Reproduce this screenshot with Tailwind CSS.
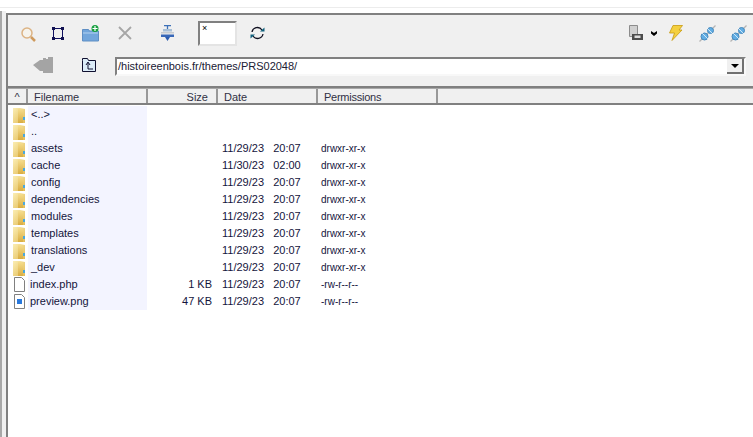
<!DOCTYPE html>
<html lang="en">

<head>
    <meta charset="UTF-8">
    <meta name="viewport" content="width=device-width, initial-scale=1.0">
    <title>histoireenbois.fr - FTP</title>
    <script src="https://cdn.jsdelivr.net/npm/@tailwindcss/browser@4"></script>
</head>

<body class="w-[753px] h-[437px] overflow-hidden bg-white font-['Liberation_Sans',sans-serif] text-[11px] text-[#14143c]">
    <!-- hidden gradients for the folder icons -->
    <svg class="absolute w-0 h-0">
        <defs>
            <linearGradient id="folderBack" x1="0" y1="0" x2="1" y2="1">
                <stop offset="0" stop-color="#fbeeb4" />
                <stop offset="1" stop-color="#e2bb55" />
            </linearGradient>
            <linearGradient id="folderFront" x1="0" y1="0" x2="0" y2="1">
                <stop offset="0" stop-color="#f6dd8c" />
                <stop offset="1" stop-color="#d9ad42" />
            </linearGradient>
        </defs>
    </svg>
    <div class="h-[7px]"></div>
    <div class="h-[1px] bg-[#ececec]"></div>
    <div class="h-[3px]"></div>
    <div class="flex h-[426px]">
        <div class="w-[2px] bg-[#a8a8a8]"></div>
        <div class="w-[4px] bg-[#f0f0f0]"></div>
        <div class="flex-1 flex flex-col min-w-0">
            <div class="h-[2px]"></div>
            <div class="flex-1 flex flex-col border-l-2 border-t-2 border-[#808080] min-w-0">
                <!-- toolbar -->
                <div class="h-[71px] bg-[#f0f0f0] flex flex-col">
                    <div class="h-[36px] flex items-center">
                        <svg class="ml-[13px] mt-[2px] w-[15px] h-[15px]" viewBox="0 0 15 15" fill="none">
                            <circle cx="6" cy="6" r="5" stroke="#dcb384" stroke-width="1.500" fill="#f6f3ec" />
                            <path d="M10 10l4 4" stroke="#cf9a5c" stroke-width="2.500" />
                        </svg>
                        <svg class="ml-[15px] w-[14px] h-[15px]" viewBox="0 0 14 15" fill="none">
                            <path d="M2.500 2.500h9v10h-9z" stroke="#101060" />
                            <path d="M1 1h3v3H1zM10 1h3v3h-3zM1 11h3v3H1zM10 11h3v3h-3z" fill="#101050" />
                        </svg>
                        <svg class="ml-[17px] w-[17px] h-[17px]" viewBox="0 0 17 17" fill="none">
                            <path d="M.5 4.500h6l1 1.500h9v10H.5z" fill="#72a6dc" stroke="#5f8fc4" />
                            <path d="M1 8h15" stroke="#b4d2f0" />
                            <circle cx="13" cy="3.500" r="3.500" fill="#18a040" />
                            <path d="M10.500 3.500h5M13 1v5" stroke="#ffffff" stroke-width="1.200" />
                        </svg>
                        <svg class="ml-[19px] w-[14px] h-[14px]" viewBox="0 0 14 14" fill="none">
                            <path d="M1 1l12 12M13 1L1 13" stroke="#a6a6a6" stroke-width="1.800" />
                        </svg>
                        <svg class="ml-[29px] w-[13px] h-[16px]" viewBox="0 0 13 16" fill="none">
                            <path d="M3 .5h7M6.500 1v4" stroke="#3c70b8" stroke-width="1.300" />
                            <path d="M2 4h9v2.500H2z" fill="#a8c0d8" />
                            <path d="M0 7h13v1.500H0z" fill="#c8ccd0" />
                            <path d="M0 9.500h13V12H0z" fill="#3868b8" />
                            <path d="M4 12h5l-2.500 4z" fill="#2c5cb0" />
                        </svg>
                        <div class="ml-[24px] w-[39px] h-[25px] bg-white border-2 border-t-[#808080] border-l-[#808080] border-r-[#e4e4e4] border-b-[#e4e4e4] pl-[2px] text-[9px] leading-[10px] text-black">×</div>
                        <svg class="ml-[13px] w-[15px] h-[14px]" viewBox="0 0 15 14" fill="none">
                            <path d="M2 6a5.500 5.500 0 0 1 10-2M13 8a5.500 5.500 0 0 1-10 2" stroke="#101020" stroke-width="1.300" />
                            <path d="M10 5.500h4.500V1.500zM5 8.500H.5v4z" fill="#10607c" />
                        </svg>
                        <div class="ml-auto flex items-center mr-[6px]">
                            <svg class="w-[16px] h-[16px]" viewBox="0 0 16 16" fill="none">
                                <path d="M1.500 .5h8v11h-8z" fill="#d0d0d0" stroke="#8c8c8c" />
                                <path d="M4 9h11v6H4z" fill="#4c4c4c" />
                                <path d="M6.500 10.500h6v2.500h-6z" fill="#dcdcdc" />
                            </svg>
                            <svg class="ml-[7px] w-[6px] h-[5px]" viewBox="0 0 6 5">
                                <path d="M0 0l3 2 3-2v2.500L3 5 0 2.500z" fill="#000000" />
                            </svg>
                            <svg class="ml-[12px] w-[14px] h-[16px]" viewBox="0 0 14 16">
                                <path d="M4 .5h9.500L10 5h3L3 15.500 5.500 8H.5z" fill="#f4d040" stroke="#c89a10" stroke-width="0.800" />
                            </svg>
                            <svg class="ml-[16px] w-[17px] h-[17px]" viewBox="0 0 17 17" fill="none">
                                <path d="M.5 16.500l16-16" stroke="#b4b4b4" stroke-width="1.200" />
                                <circle cx="5.500" cy="11.500" r="3.500" fill="#62aee4" stroke="#4588bc" />
                                <circle cx="11.500" cy="5.500" r="3" fill="#62aee4" stroke="#4588bc" />
                                <path d="M3 8l6 6M8 3l6 6" stroke="#ffffff" stroke-width="0.700" />
                            </svg>
                            <svg class="ml-[14px] w-[17px] h-[17px]" viewBox="0 0 17 17" fill="none">
                                <path d="M.5 16.500l16-16" stroke="#b4b4b4" stroke-width="1.200" />
                                <circle cx="5.500" cy="11.500" r="3.500" fill="#62aee4" stroke="#4588bc" />
                                <circle cx="11.500" cy="5.500" r="3" fill="#62aee4" stroke="#4588bc" />
                                <path d="M3 8l6 6M8 3l6 6" stroke="#ffffff" stroke-width="0.700" />
                            </svg>
                        </div>
                    </div>
                    <div class="flex-1 flex items-start pt-[6px]">
                        <svg class="ml-[25px] w-[20px] h-[16px]" viewBox="0 0 20 16">
                            <path d="M0 8l7-5h3V1h3v1h2V0h5v16H10v-2H7z" fill="#a4a4a4" />
                        </svg>
                        <svg class="ml-[29px] mt-[1px] w-[14px] h-[14px]" viewBox="0 0 14 14" fill="none">
                            <path d="M.5 2.500V.5h5l1 2h7v11H.5z" fill="#dcecf8" stroke="#101030" />
                            <path d="M6 11V5M4 7l2-3 2 3M6 11h5" stroke="#101030" />
                        </svg>
                        <div class="ml-[19px] mr-[7px] flex-1 h-[19px] flex bg-white border-2 border-t-[#808080] border-l-[#808080] border-r-[#f8f8f8] border-b-[#f8f8f8] min-w-0">
                            <span class="flex-1 pl-[1px] text-[11px] leading-[15px] text-[#202034] truncate">/histoireenbois.fr/themes/PRS02048/</span>
                            <span class="w-[17px] h-[15px] bg-[#f0f0f0] border-r-2 border-b-2 border-[#707070] flex items-center justify-center">
                                <svg class="w-[8px] h-[4px]" viewBox="0 0 8 4">
                                    <path d="M0 0h8L4 4z" fill="#000000" />
                                </svg>
                            </span>
                        </div>
                    </div>
                </div>
                <div class="h-[2px] bg-[#808080]"></div>
                <div class="h-[1px] bg-[#a8a8a8]"></div>
                <!-- column header -->
                <div class="h-[16px] flex bg-[#f0f0f0] border-b-2 border-b-[#808080] text-[11px] leading-[16px] text-[#303044]">
                    <div class="w-[20px] border-r-2 border-[#989898] text-center">^</div>
                    <div class="w-[120px] border-r-2 border-[#989898] pl-[6px]">Filename</div>
                    <div class="w-[70px] border-r-2 border-[#989898] pr-[8px] text-right">Size</div>
                    <div class="w-[100px] border-r-2 border-[#989898] pl-[6px]">Date</div>
                    <div class="w-[120px] border-r-2 border-[#989898] pl-[6px] tracking-[-0.25px]">Permissions</div>
                    <div class="flex-1"></div>
                </div>
                <!-- file list -->
                <div class="flex-1 pt-[1px]">
                    <div class="h-[17px] flex items-center"><span class="w-[20px] flex justify-center pl-[3px]"><svg class="w-[13px] h-[16px]" viewBox="0 0 13 16"><path d="M0 1h7l5 1v14H0z" fill="url(#folderBack)" /><path d="M5 2l5 1v13H5z" fill="url(#folderFront)" /><path d="M10 10h2v3h-2z" fill="#4aa8dc" /></svg></span><span class="w-[119px] pl-[3px] bg-[#f3f4ff] leading-[17px]">&lt;..&gt;</span></div>
                    <div class="h-[17px] flex items-center"><span class="w-[20px] flex justify-center pl-[3px]"><svg class="w-[13px] h-[16px]" viewBox="0 0 13 16"><path d="M0 1h7l5 1v14H0z" fill="url(#folderBack)" /><path d="M5 2l5 1v13H5z" fill="url(#folderFront)" /><path d="M10 10h2v3h-2z" fill="#4aa8dc" /></svg></span><span class="w-[119px] pl-[3px] bg-[#f3f4ff] leading-[17px]">..</span></div>
                    <div class="h-[17px] flex items-center"><span class="w-[20px] flex justify-center pl-[3px]"><svg class="w-[13px] h-[16px]" viewBox="0 0 13 16"><path d="M0 1h7l5 1v14H0z" fill="url(#folderBack)" /><path d="M5 2l5 1v13H5z" fill="url(#folderFront)" /><path d="M10 10h2v3h-2z" fill="#4aa8dc" /></svg></span><span class="w-[119px] pl-[3px] bg-[#f3f4ff] leading-[17px]">assets</span><span class="w-[70px]"></span><span class="w-[100px] pl-[5px] whitespace-pre">11/29/23   20:07</span><span class="pl-[4px] text-[10px]">drwxr-xr-x</span></div>
                    <div class="h-[17px] flex items-center"><span class="w-[20px] flex justify-center pl-[3px]"><svg class="w-[13px] h-[16px]" viewBox="0 0 13 16"><path d="M0 1h7l5 1v14H0z" fill="url(#folderBack)" /><path d="M5 2l5 1v13H5z" fill="url(#folderFront)" /><path d="M10 10h2v3h-2z" fill="#4aa8dc" /></svg></span><span class="w-[119px] pl-[3px] bg-[#f3f4ff] leading-[17px]">cache</span><span class="w-[70px]"></span><span class="w-[100px] pl-[5px] whitespace-pre">11/30/23   02:00</span><span class="pl-[4px] text-[10px]">drwxr-xr-x</span></div>
                    <div class="h-[17px] flex items-center"><span class="w-[20px] flex justify-center pl-[3px]"><svg class="w-[13px] h-[16px]" viewBox="0 0 13 16"><path d="M0 1h7l5 1v14H0z" fill="url(#folderBack)" /><path d="M5 2l5 1v13H5z" fill="url(#folderFront)" /><path d="M10 10h2v3h-2z" fill="#4aa8dc" /></svg></span><span class="w-[119px] pl-[3px] bg-[#f3f4ff] leading-[17px]">config</span><span class="w-[70px]"></span><span class="w-[100px] pl-[5px] whitespace-pre">11/29/23   20:07</span><span class="pl-[4px] text-[10px]">drwxr-xr-x</span></div>
                    <div class="h-[17px] flex items-center"><span class="w-[20px] flex justify-center pl-[3px]"><svg class="w-[13px] h-[16px]" viewBox="0 0 13 16"><path d="M0 1h7l5 1v14H0z" fill="url(#folderBack)" /><path d="M5 2l5 1v13H5z" fill="url(#folderFront)" /><path d="M10 10h2v3h-2z" fill="#4aa8dc" /></svg></span><span class="w-[119px] pl-[3px] bg-[#f3f4ff] leading-[17px]">dependencies</span><span class="w-[70px]"></span><span class="w-[100px] pl-[5px] whitespace-pre">11/29/23   20:07</span><span class="pl-[4px] text-[10px]">drwxr-xr-x</span></div>
                    <div class="h-[17px] flex items-center"><span class="w-[20px] flex justify-center pl-[3px]"><svg class="w-[13px] h-[16px]" viewBox="0 0 13 16"><path d="M0 1h7l5 1v14H0z" fill="url(#folderBack)" /><path d="M5 2l5 1v13H5z" fill="url(#folderFront)" /><path d="M10 10h2v3h-2z" fill="#4aa8dc" /></svg></span><span class="w-[119px] pl-[3px] bg-[#f3f4ff] leading-[17px]">modules</span><span class="w-[70px]"></span><span class="w-[100px] pl-[5px] whitespace-pre">11/29/23   20:07</span><span class="pl-[4px] text-[10px]">drwxr-xr-x</span></div>
                    <div class="h-[17px] flex items-center"><span class="w-[20px] flex justify-center pl-[3px]"><svg class="w-[13px] h-[16px]" viewBox="0 0 13 16"><path d="M0 1h7l5 1v14H0z" fill="url(#folderBack)" /><path d="M5 2l5 1v13H5z" fill="url(#folderFront)" /><path d="M10 10h2v3h-2z" fill="#4aa8dc" /></svg></span><span class="w-[119px] pl-[3px] bg-[#f3f4ff] leading-[17px]">templates</span><span class="w-[70px]"></span><span class="w-[100px] pl-[5px] whitespace-pre">11/29/23   20:07</span><span class="pl-[4px] text-[10px]">drwxr-xr-x</span></div>
                    <div class="h-[17px] flex items-center"><span class="w-[20px] flex justify-center pl-[3px]"><svg class="w-[13px] h-[16px]" viewBox="0 0 13 16"><path d="M0 1h7l5 1v14H0z" fill="url(#folderBack)" /><path d="M5 2l5 1v13H5z" fill="url(#folderFront)" /><path d="M10 10h2v3h-2z" fill="#4aa8dc" /></svg></span><span class="w-[119px] pl-[3px] bg-[#f3f4ff] leading-[17px]">translations</span><span class="w-[70px]"></span><span class="w-[100px] pl-[5px] whitespace-pre">11/29/23   20:07</span><span class="pl-[4px] text-[10px]">drwxr-xr-x</span></div>
                    <div class="h-[17px] flex items-center"><span class="w-[20px] flex justify-center pl-[3px]"><svg class="w-[13px] h-[16px]" viewBox="0 0 13 16"><path d="M0 1h7l5 1v14H0z" fill="url(#folderBack)" /><path d="M5 2l5 1v13H5z" fill="url(#folderFront)" /><path d="M10 10h2v3h-2z" fill="#4aa8dc" /></svg></span><span class="w-[119px] pl-[3px] bg-[#f3f4ff] leading-[17px]">_dev</span><span class="w-[70px]"></span><span class="w-[100px] pl-[5px] whitespace-pre">11/29/23   20:07</span><span class="pl-[4px] text-[10px]">drwxr-xr-x</span></div>
                    <div class="h-[17px] flex items-center"><span class="w-[20px] flex justify-center pl-[3px]"><svg class="w-[11px] h-[15px]" viewBox="0 0 11 15" fill="none"><path d="M.5.5h7l3 3v11H.5z" fill="#ffffff" stroke="#808080" /></svg></span><span class="w-[119px] pl-[2px] bg-[#f3f4ff] leading-[17px]">index.php</span><span class="w-[70px] pr-[5px] text-right">1 KB</span><span class="w-[100px] pl-[5px] whitespace-pre">11/29/23   20:07</span><span class="pl-[4px] text-[10px]">-rw-r--r--</span></div>
                    <div class="h-[17px] flex items-center"><span class="w-[20px] flex justify-center pl-[3px]"><svg class="w-[11px] h-[15px]" viewBox="0 0 11 15" fill="none"><path d="M.5.5h7l3 3v11H.5z" fill="#ffffff" stroke="#808080" /><path d="M3 5h5v5H3z" fill="#2878dc" /></svg></span><span class="w-[119px] pl-[2px] bg-[#f3f4ff] leading-[17px]">preview.png</span><span class="w-[70px] pr-[5px] text-right">47 KB</span><span class="w-[100px] pl-[5px] whitespace-pre">11/29/23   20:07</span><span class="pl-[4px] text-[10px]">-rw-r--r--</span></div>
                </div>
            </div>
        </div>
    </div>
</body>

</html>
